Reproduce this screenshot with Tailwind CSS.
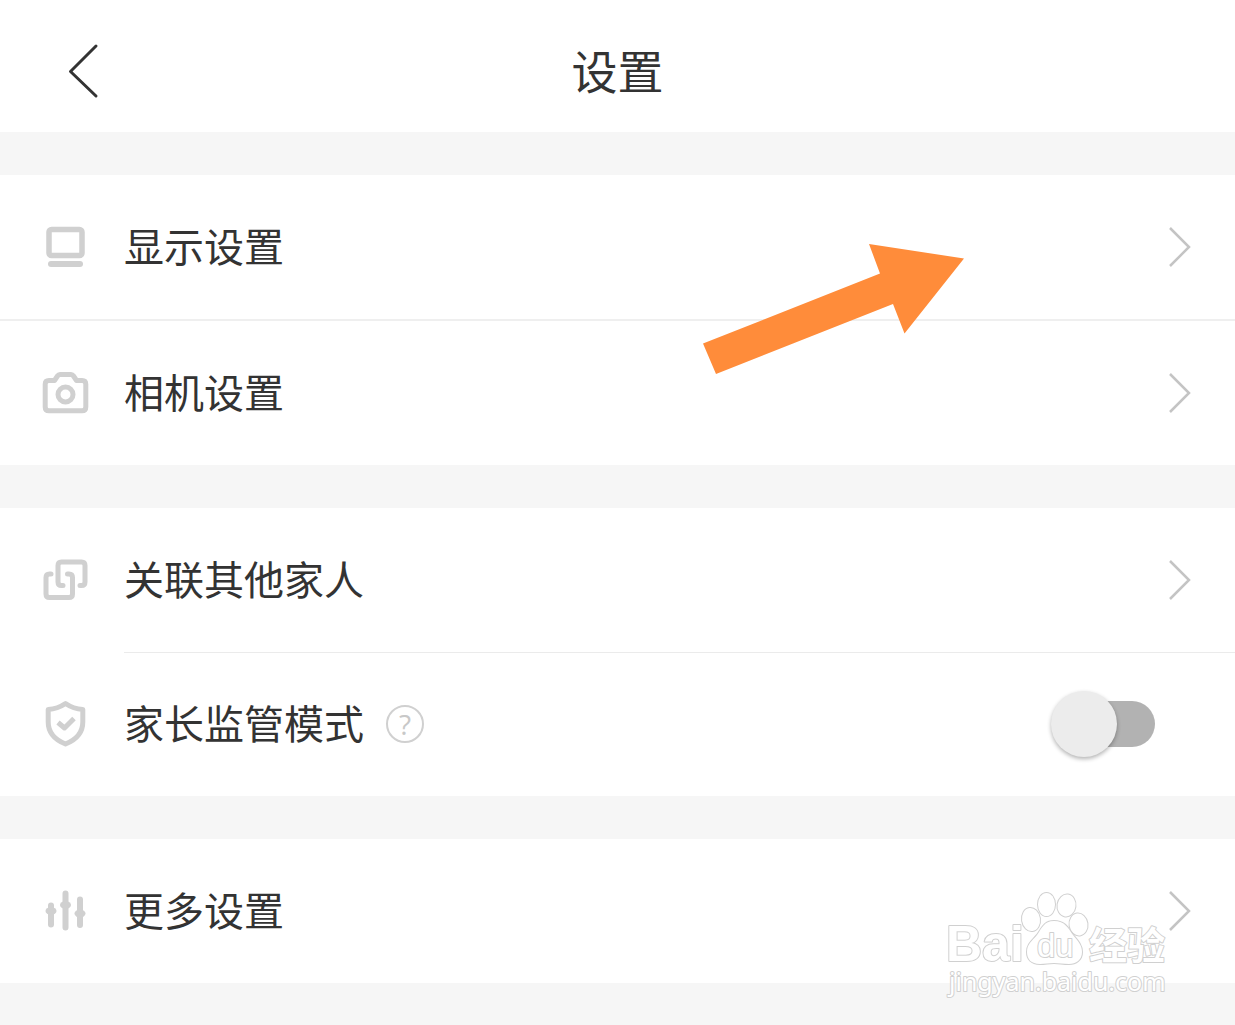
<!DOCTYPE html>
<html lang="zh-Hans">
<head>
  <meta charset="UTF-8">
  <meta name="viewport" content="width=device-width, initial-scale=1.0">
  <title>设置</title>
  <script src="https://cdn.jsdelivr.net/npm/@tailwindcss/browser@4"></script>
</head>
<body class="relative min-h-screen bg-[#f6f6f6] font-['Noto_Sans_CJK_SC',sans-serif] text-[#333]">

  <header class="grid h-[132px] grid-cols-[1fr_auto_1fr] items-center bg-white pt-[10px]">
    <button type="button" aria-label="返回" class="ml-[60px] flex h-16 w-12 items-center justify-center">
      <svg class="h-14 w-8" viewBox="0 0 32 56" fill="none" stroke="#333" stroke-width="3" stroke-linecap="round" stroke-linejoin="round">
        <path d="M28 3 2.500 28.500 28 53"/>
      </svg>
    </button>
    <h1 class="pb-1 text-[46px] leading-[64px]">设置</h1>
  </header>

  <main class="mt-[43px] flex flex-col gap-[43px]">

    <section class="relative bg-white">
      <a href="#display" class="flex h-[146px] items-center border-b-2 border-[#efefef] pr-11 pl-[41px]">
        <svg class="mr-[35px] size-12" viewBox="0 0 48 48" fill="none" stroke="#d0d0d0">
          <rect x="8" y="6.500" width="33" height="26" rx="2.500" stroke-width="5.500"/>
          <path d="M10 41h29" stroke-width="6" stroke-linecap="round"/>
        </svg>
        <span class="flex-1 pb-1 text-[40px] leading-[60px]">显示设置</span>
        <svg class="h-10 w-[22px]" viewBox="0 0 22 40" fill="none" stroke="#c4c4c4" stroke-width="2.500"><path d="M1 1l19 19L1 39"/></svg>
      </a>
      <a href="#camera" class="flex h-36 items-center pr-11 pl-[41px]">
        <svg class="mr-[35px] size-12" viewBox="0 0 48 48" fill="none" stroke="#d0d0d0" stroke-width="5">
          <path d="M8 11.500h5.500l3-4.500q1-1.500 2.500-1.500h11q1.500 0 2.500 1.500l3 4.500H41q3.800 0 3.800 3.800V38q0 3.800-3.800 3.800H8q-3.800 0-3.800-3.800V15.300q0-3.800 3.800-3.800z" stroke-linejoin="round"/>
          <circle cx="24.500" cy="25.500" r="7.500"/>
        </svg>
        <span class="flex-1 pb-1 text-[40px] leading-[60px]">相机设置</span>
        <svg class="h-10 w-[22px]" viewBox="0 0 22 40" fill="none" stroke="#c4c4c4" stroke-width="2.500"><path d="M1 1l19 19L1 39"/></svg>
      </a>

      <!-- pointer to the first row -->
      <svg class="pointer-events-none absolute top-[69px] right-[271px] h-[130px] w-[261px]" viewBox="0 0 261 130" fill="#ff8c3a">
        <path d="M0 99.500 177 29.500 166 0l95 14.500L201.500 89.500 190 60 13 130z"/>
      </svg>
    </section>

    <section class="bg-white">
      <a href="#family" class="flex h-36 items-center pr-11 pl-[41px]">
        <svg class="mr-[35px] size-12" viewBox="0 0 48 48" fill="none" stroke="#d0d0d0" stroke-width="5" stroke-linecap="round" stroke-linejoin="round">
          <path d="M39 29.500h1.500q3.500 0 3.500-3.500V9.500Q44 6 40.500 6H20.500Q17 6 17 9.500V26q0 3.500 3.500 3.500H22"/>
          <path d="M10 18H8.500Q5 18 5 21.500V38q0 3.500 3.500 3.500H28q3.500 0 3.500-3.500V21.500Q31.500 18 28 18h-1.500"/>
        </svg>
        <span class="flex-1 pb-1 text-[40px] leading-[60px]">关联其他家人</span>
        <svg class="h-10 w-[22px]" viewBox="0 0 22 40" fill="none" stroke="#c4c4c4" stroke-width="2.500"><path d="M1 1l19 19L1 39"/></svg>
      </a>
      <div class="ml-[124px] h-px bg-[#ebebeb]"></div>
      <div class="flex h-[143px] items-center pr-20 pb-[2px] pl-[41px]">
        <svg class="mr-[35px] size-12" viewBox="0 0 48 48" fill="none" stroke="#d0d0d0" stroke-width="5" stroke-linejoin="round">
          <path d="M24.500 3.500q8 5.500 17.300 6V22c0 10-6 17.500-17.300 22C13.200 39.500 7.200 32 7.200 22V9.500q9.300-.5 17.300-6z"/>
          <path d="M17 22.500l6.500 5.500L33 18.500"/>
        </svg>
        <label for="guard" class="pb-1 text-[40px] leading-[60px]">家长监管模式</label>
        <button type="button" aria-label="说明" class="ml-[22px] flex size-[38px] items-center justify-center rounded-full border-2 border-[#d0d0d0] font-['Open_Sans',sans-serif] text-[28px] leading-none text-[#c8c8c8]">?</button>
        <input id="guard" type="checkbox" role="switch" class="relative ml-auto h-[66px] w-[104px] appearance-none before:absolute before:top-[10px] before:right-0 before:h-[46px] before:w-[92px] before:rounded-full before:bg-[#b2b2b2] after:absolute after:top-0 after:left-0 after:size-[66px] after:rounded-full after:bg-[#ececec] after:shadow-[0_2px_4px_rgba(0,0,0,0.3)] checked:after:left-[38px]">
      </div>
    </section>

    <section class="bg-white">
      <a href="#more" class="flex h-36 items-center pr-11 pl-[41px]">
        <svg class="mr-[35px] size-12" viewBox="0 0 48 48" fill="#d0d0d0" stroke="#d0d0d0" stroke-width="6" stroke-linecap="round">
          <path d="M10 18.500v19M24.500 6.500v34M39 12.500v25.500"/>
          <g stroke="none">
            <ellipse cx="10" cy="24" rx="5.500" ry="4"/>
            <ellipse cx="24.500" cy="18" rx="5.500" ry="4"/>
            <ellipse cx="39" cy="26.500" rx="5.500" ry="4"/>
          </g>
        </svg>
        <span class="flex-1 pb-1 text-[40px] leading-[60px]">更多设置</span>
        <svg class="h-10 w-[22px]" viewBox="0 0 22 40" fill="none" stroke="#c4c4c4" stroke-width="2.500"><path d="M1 1l19 19L1 39"/></svg>
      </a>
    </section>
  </main>

  <!-- watermark -->
  <svg class="pointer-events-none absolute top-[890px] right-[60px] h-[115px] w-[230px]" viewBox="0 0 230 115" fill="#fff" stroke="#d0d0d0" stroke-width="2" stroke-linejoin="round" paint-order="stroke">
    <text x="1" y="71" font-family="Liberation Sans, sans-serif" font-weight="700" font-size="50">Bai</text>
    <g stroke-width="2">
      <ellipse cx="86" cy="29.500" rx="9" ry="11.500" transform="rotate(-8 86 29.500)"/>
      <ellipse cx="101.500" cy="14.500" rx="8.500" ry="11.500"/>
      <ellipse cx="121.500" cy="15.500" rx="9" ry="11" transform="rotate(8 121.500 15.500)"/>
      <ellipse cx="133.500" cy="34.500" rx="9" ry="11" transform="rotate(-8 133.500 34.500)"/>
      <path d="M109 31c11 0 14 7 19 14 5 6 9 10 9 17 0 8-6 12-13 12-6 0-10-1-15-1s-9 1-14 1c-9 0-13-5-13-12 0-8 5-11 10-17 5-7 7-14 17-14z"/>
    </g>
    <text x="92" y="67" font-family="Liberation Sans, sans-serif" font-size="33">du</text>
    <text x="144" y="69" font-family="Noto Sans CJK SC, sans-serif" font-weight="700" font-size="38">经验</text>
    <text x="4" y="101" font-family="Noto Sans, sans-serif" font-size="25">jingyan.baidu.com</text>
  </svg>
</body>
</html>
